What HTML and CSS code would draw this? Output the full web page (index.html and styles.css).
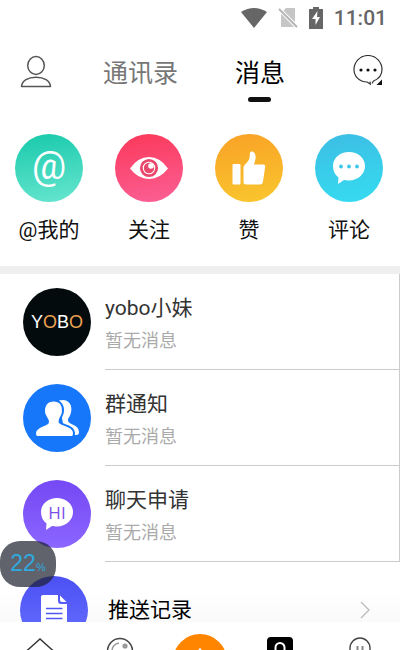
FILE: index.html
```html
<!DOCTYPE html>
<html lang="zh-CN">
<head>
<meta charset="utf-8">
<meta name="viewport" content="width=device-width, initial-scale=1">
<title>消息</title>
<link rel="stylesheet" href="styles.css">
</head>
<body>
<div class="app">
  <div class="status">
    <svg width="26" height="22" viewBox="0 0 26 22" aria-hidden="true"><path d="M0 5Q13-3 26 5L13 21Z" fill="#666"/></svg>
    <svg width="20" height="22" viewBox="0 0 20 22" aria-hidden="true"><path d="M8 1h9v19H3V6z" fill="#c6c6c6"/><path d="M0 1l20 20" stroke="#fff" stroke-width="4"/><path d="M1 2l18 18" stroke="#b5b5b5" stroke-width="2"/></svg>
    <svg width="14" height="22" viewBox="0 0 14 22" aria-hidden="true"><path d="M4 0h6v2h4v20H0V2h4z" fill="#666"/><path d="M8.500 4l-5.500 8h3.500v6L11 10H8z" fill="#fff"/></svg>
    <span class="time">11:01</span>
  </div>

  <header class="header">
    <button class="icon-button" aria-label="个人资料">
      <svg width="32" height="34" viewBox="0 0 32 34" fill="none" stroke="#555" stroke-width="1.500"><ellipse cx="16" cy="10.500" rx="8.300" ry="9"/><path d="M1.500 31.500C2 25.500 8 22.200 16 22.200S30 25.500 30.500 31.500Z" stroke-linejoin="round"/></svg>
    </button>
    <nav class="tabs">
      <a class="tab" href="#contacts">通讯录</a>
      <a class="tab tab-active" href="#messages">消息</a>
    </nav>
    <button class="icon-button" aria-label="新建聊天">
      <svg width="32" height="34" viewBox="0 0 32 34"><path d="M18 26.500l.3 2.500-3.300-2C7 27 2 21 2 14.500a14 14 0 0 1 28 0c0 6-3.500 9.500-8.500 11.500l-1.500 2.500" fill="none" stroke="#333" stroke-width="1.200"/><g fill="#111"><circle cx="9" cy="15" r="1.600"/><circle cx="16" cy="15" r="1.600"/><circle cx="23" cy="15" r="1.600"/><path d="M30 24.500v5.500h-5.500z"/></g></svg>
    </button>
  </header>

  <main class="content">
    <section class="actions">
      <a class="action" href="#mentions">
        <span class="disc disc-teal">@</span>
        <span>@我的</span>
      </a>
      <a class="action" href="#following">
        <span class="disc disc-pink"><svg width="68" height="68" viewBox="0 0 68 68" aria-hidden="true"><path d="M15 34.500Q23 23 34 23t19 11.500Q45 45 34 45T15 34.500Z" fill="#fff"/><circle cx="34" cy="34" r="7.700" fill="#fff" stroke="#e8486c" stroke-width="2.800"/><circle cx="34" cy="34" r="5.200" fill="#e8486c"/><circle cx="36" cy="32" r="2.800" fill="#fff"/></svg></span>
        <span>关注</span>
      </a>
      <a class="action" href="#likes">
        <span class="disc disc-orange"><svg width="68" height="68" viewBox="0 0 68 68" aria-hidden="true" fill="#fff"><rect x="17.500" y="30" width="8" height="20.500" rx="1"/><path d="M28.500 33c0-2 5-4.500 6-9 .6-3-.2-6.500 2-6.500 4 0 5 5 3.500 9.500L39 30.500h9.500q2 0 1.700 2L48 47.500q-.5 3-3 3H31q-2.500 0-2.500-2.500Z"/></svg></span>
        <span>赞</span>
      </a>
      <a class="action" href="#comments">
        <span class="disc disc-cyan"><svg width="68" height="68" viewBox="0 0 68 68" aria-hidden="true"><path d="M34 18c9 0 16 6 16 14s-7 14.500-16 14.500c-2 0-3-.2-5-.5l-6 4 .5-6.500C20 41 18 37 18 32c0-8 7-14 16-14Z" fill="#fff"/><g fill="#3bc9e9"><circle cx="26" cy="32.500" r="1.900"/><circle cx="34" cy="32.500" r="1.900"/><circle cx="42" cy="32.500" r="1.900"/></g></svg></span>
        <span>评论</span>
      </a>
    </section>

    <section class="threads">
      <a class="thread" href="#yobo">
        <span class="disc disc-black"><span>Y<b>O</b>B<b>O</b></span></span>
        <span class="thread-body"><span class="name">yobo小妹</span><span class="preview">暂无消息</span></span>
      </a>
      <a class="thread" href="#groups">
        <span class="disc disc-blue"><svg width="68" height="68" viewBox="0 0 68 68" aria-hidden="true" fill="#fff"><path d="M36 16.500c9-2.500 14 4 12 12-.7 4-3 5-3 8 0 4 11 4 11 11.500q0 3-2.500 3H40V40Z"/><path d="M30.500 16.500c7 0 10 5 9.500 11-.4 5-3.500 6-3.500 10 0 4 14.500 3 14.500 12q0 3.500-2.500 3.500h-34q-2.500 0-2.500-3.500C12 41 25 42 25 38c0-4-3.500-5-4-10-.4-6 2.500-11.500 9.500-11.500Z" stroke="#1677fa" stroke-width="2"/></svg></span>
        <span class="thread-body"><span class="name">群通知</span><span class="preview">暂无消息</span></span>
      </a>
      <a class="thread" href="#requests">
        <span class="disc disc-violet"><svg width="68" height="68" viewBox="0 0 68 68" aria-hidden="true"><path d="M34 18c9 0 16 6 16 14s-7 14.500-16 14.500c-2 0-3-.2-5-.5l-6 4 .5-6.500C20 41 18 37 18 32c0-8 7-14 16-14Z" fill="#fff"/><text class="hi" x="34" y="39" text-anchor="middle">HI</text></svg></span>
        <span class="thread-body"><span class="name">聊天申请</span><span class="preview">暂无消息</span></span>
      </a>
    </section>

    <a class="push" href="#push">
      <span class="disc disc-indigo"><svg width="68" height="68" viewBox="0 0 68 68" aria-hidden="true"><path d="M23 19h15v6q0 3 3 3h6v24H21V21q0-2 2-2Z" fill="#fff"/><path d="M40 19.500l6.500 6.500H42q-2 0-2-2Z" fill="#fff"/><path d="M26 32.500h16.500M26 37.500h16.500M26 42.500h16.500" stroke="#5058f4" stroke-width="1.500"/></svg></span>
      <span class="push-name">推送记录</span>
      <svg width="10" height="18" viewBox="0 0 10 18" fill="none" stroke="#bbb" stroke-width="1.300" aria-hidden="true"><path d="M1 1l8 8-8 8"/></svg>
    </a>
  </main>

  <nav class="bottom">
    <a href="#home" aria-label="首页"><svg width="32" height="28" viewBox="0 0 32 28" fill="none" stroke="#333" stroke-width="1.400"><path d="M2 29.500L16 17l14 12.500"/></svg></a>
    <a href="#discover" aria-label="发现"><svg width="32" height="28" viewBox="0 0 32 28" fill="none" stroke="#444" stroke-width="1.400"><circle cx="16" cy="29" r="12.500"/><path d="M8 28q1-6 7-7" stroke="#999"/><circle cx="21" cy="24" r="2.600" fill="#999" stroke="none"/></svg></a>
    <a href="#create" aria-label="发布"><svg width="56" height="28" viewBox="0 0 56 28"><circle cx="28" cy="39" r="27" fill="#ff8400"/><path d="M28 26.500v14" stroke="#fff" stroke-width="2.500"/></svg></a>
    <a href="#messages" aria-label="消息"><svg width="32" height="28" viewBox="0 0 32 28"><rect x="3" y="15" width="26" height="26" rx="4" fill="#000"/><path d="M11.500 29v-3.500a4.500 4.500 0 0 1 9 0V29" fill="none" stroke="#fff" stroke-width="2"/></svg></a>
    <a href="#me" aria-label="我的"><svg width="32" height="28" viewBox="0 0 32 28" fill="none" stroke="#444" stroke-width="1.400"><path d="M6 30v-4a10 10 0 0 1 20 0v4"/><path d="M13.500 24v5M18.500 24v5" stroke="#888" stroke-width="2"/></svg></a>
  </nav>

  <div class="meter">22<small>%</small></div>
</div>
</body>
</html>
```
FILE: styles.css
```css
* { box-sizing: border-box; }

body {
  margin: 0;
  background: #fff;
  color: #111;
  font-family: Roboto, "Noto Sans CJK SC", sans-serif;
}

a { color: inherit; text-decoration: none; }
svg { display: block; }

.app {
  position: relative;
  display: flex;
  flex-direction: column;
  height: 100vh;
  overflow: hidden;
}

.status {
  display: flex;
  align-items: center;
  justify-content: flex-end;
  gap: 11px;
  padding-right: 13px;
  height: 36px;
  flex: none;
}

.time {
  color: #666;
  font: 500 21px/24px Roboto, sans-serif;
}

.header {
  display: flex;
  align-items: center;
  flex: none;
  height: 72px;
  padding: 0 16px 0 20px;
}

.icon-button {
  padding: 0;
  border: 0;
  background: none;
}

.tabs {
  display: flex;
  flex: 1;
  justify-content: center;
  gap: 57px;
  padding: 4px 16px 0 0;
}

.tab {
  color: #777;
  font-size: 25px;
  line-height: 36px;
}

.tab-active {
  position: relative;
  color: #000;
}

.tab-active::after {
  content: "";
  position: absolute;
  left: 50%;
  top: 41px;
  width: 23px;
  height: 5px;
  margin-left: -12px;
  border-radius: 3px;
  background: #111;
}

.content {
  flex: 1;
  min-height: 0;
  overflow: hidden;
}

.actions {
  display: grid;
  grid-template-columns: repeat(4, 1fr);
  padding: 26px 0 20px;
  border-bottom: 8px solid #efefef;
}

.action {
  display: flex;
  flex-direction: column;
  align-items: center;
  gap: 12px;
  padding-right: 2px;
  font-size: 21px;
  line-height: 32px;
}

.disc {
  display: flex;
  align-items: center;
  justify-content: center;
  flex: none;
  width: 68px;
  height: 68px;
  border-radius: 50%;
  color: #fff;
}

.disc-teal {
  padding-bottom: 4px;
  background: linear-gradient(170deg, #18c9ab, #68e6d0);
  font: 38px/44px Roboto, sans-serif;
}
.disc-pink { background: linear-gradient(170deg, #fb3859, #fb6096); }
.disc-orange { background: linear-gradient(170deg, #f9a126, #f9c72e); }
.disc-cyan { background: linear-gradient(170deg, #3dbde4, #35dcf1); }
.disc-black {
  background: #040b0d;
  font: 18px/20px "Liberation Sans", sans-serif;
}
.disc-black b { color: #eda052; font-weight: 400; }
.disc-blue { background: #1677fa; }
.disc-violet { background: linear-gradient(#7548f4, #8b66ff); }
.disc-indigo { background: linear-gradient(#4b50f3, #6870ff); }

.hi {
  fill: #7a50e8;
  font: 17px "Open Sans", sans-serif;
}

.threads { border-right: 1px solid #ccc; }

.thread {
  display: flex;
  align-items: stretch;
  gap: 14px;
  padding-left: 23px;
}

.thread .disc { margin-top: 14px; }

.thread-body {
  display: flex;
  flex: 1;
  flex-direction: column;
  height: 96px;
  padding-top: 18px;
  border-bottom: 1px solid #ccc;
}

.name {
  color: #333;
  font-size: 21px;
  line-height: 32px;
}

.preview {
  color: #aaa;
  font-size: 18px;
  line-height: 34px;
}

.push {
  display: flex;
  align-items: center;
  gap: 20px;
  padding: 14px 30px 14px 20px;
  background: linear-gradient(#fff 30px, #fafafa 60px);
}

.push-name {
  flex: 1;
  color: #000;
  font-size: 21px;
  line-height: 22px;
}

.bottom {
  display: grid;
  grid-template-columns: repeat(5, 1fr);
  justify-items: center;
  flex: none;
  height: 28px;
  overflow: hidden;
  background: #fff;
}

.meter {
  position: absolute;
  left: 0;
  top: 541px;
  display: flex;
  align-items: baseline;
  justify-content: center;
  width: 56px;
  height: 46px;
  border-radius: 20px;
  background: rgba(28, 32, 46, 0.7);
  color: #2eaadf;
  font: 23px/44px "Liberation Sans", sans-serif;
}

.meter small { font-size: 11px; }
```
